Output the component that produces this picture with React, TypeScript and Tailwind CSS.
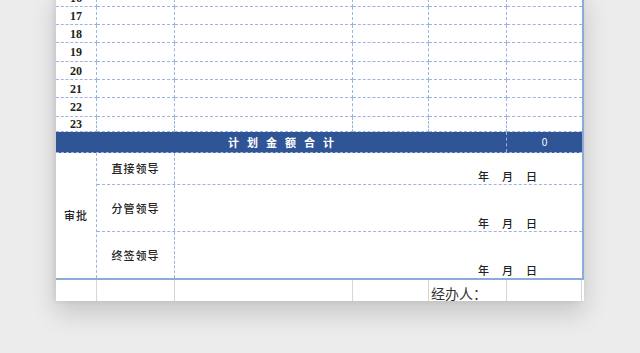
const cjk = "font-['Noto_Sans_CJK_SC',sans-serif]";

const rows = [
  { n: 16, h: "h-[18px]" },
  { n: 17, h: "h-[18px]" },
  { n: 18, h: "h-[18px]" },
  { n: 19, h: "h-[19px]" },
  { n: 20, h: "h-[18px]" },
  { n: 21, h: "h-[18px]" },
  { n: 22, h: "h-[19px]" },
  { n: 23, h: "h-[15px]" },
];

const approvals = [
  { label: "直接领导", h: "h-[32px]" },
  { label: "分管领导", h: "h-[47px]" },
  { label: "终签领导", h: "h-[46px]" },
];

const cols = "grid grid-cols-[41px_78px_178px_76px_78px_75px]";
const dashB = "border-b border-dashed border-[#9db3e0]";
const dashR = "border-r border-dashed border-[#9db3e0]";

export default function App() {
  return (
    <div className="h-[353px] w-[640px] overflow-hidden bg-[#ececec]">
      <div className="ml-[56px] -mt-[11px] w-[528px] bg-white shadow-[0_12px_24px_rgba(0,0,0,0.16),-2px_0_6px_rgba(0,0,0,0.08)]">
        <div className="border-r-2 border-[#8eaadb]">
          {rows.map((r) => (
            <div key={r.n} className={`${cols} ${r.h}`}>
              <div
                className={`${dashB} ${dashR} flex items-center justify-center font-['Liberation_Serif',serif] text-[12px] font-bold leading-none text-[#222]`}
              >
                {r.n}
              </div>
              {[0, 1, 2, 3].map((i) => (
                <div key={i} className={`${dashB} ${dashR}`} />
              ))}
              <div className={dashB} />
            </div>
          ))}

          <div className={`${cols} h-[21px] bg-[#2f5597] border-b border-dashed border-[#9db3e0]`}>
            <div
              className={`col-span-5 flex items-center justify-center border-r border-dashed border-[#9db3e0] ${cjk} text-[11px] font-bold tracking-[8px] text-white`}
            >
              <span className="pl-[8px]">计划金额合计</span>
            </div>
            <div className="flex items-center justify-center font-['Liberation_Sans',sans-serif] text-[10px] text-white">
              0
            </div>
          </div>

          <div className="flex border-b-2 border-[#8eaadb]">
            <div
              className={`w-[41px] shrink-0 ${dashR} flex items-center justify-center ${cjk} text-[11px] font-medium tracking-[1px] text-[#222]`}
            >
              审批
            </div>
            <div className="flex-1">
              {approvals.map((a, i) => (
                <div
                  key={a.label}
                  className={`flex ${a.h} ${i < approvals.length - 1 ? dashB : ""}`}
                >
                  <div
                    className={`w-[78px] shrink-0 ${dashR} flex items-center justify-center ${cjk} text-[11px] font-medium tracking-[1px] text-[#222]`}
                  >
                    {a.label}
                  </div>
                  <div
                    className={`flex flex-1 items-end justify-end gap-[13px] pb-[1px] pr-[45px] ${cjk} text-[11px] font-medium leading-[14px] text-[#222]`}
                  >
                    <span>年</span>
                    <span>月</span>
                    <span>日</span>
                  </div>
                </div>
              ))}
            </div>
          </div>
        </div>

        <div className={`${cols} h-[21px]`}>
          {[0, 1, 2, 3].map((i) => (
            <div key={i} className="border-r border-[#d6d6d6]" />
          ))}
          <div className="relative border-r border-[#d6d6d6]">
            <span
              className={`absolute left-[2px] top-[5px] whitespace-nowrap ${cjk} text-[14px] leading-[16px] text-[#333]`}
            >
              经办人：
            </span>
          </div>
          <div className="border-r border-[#d6d6d6]" />
        </div>
      </div>
    </div>
  );
}
